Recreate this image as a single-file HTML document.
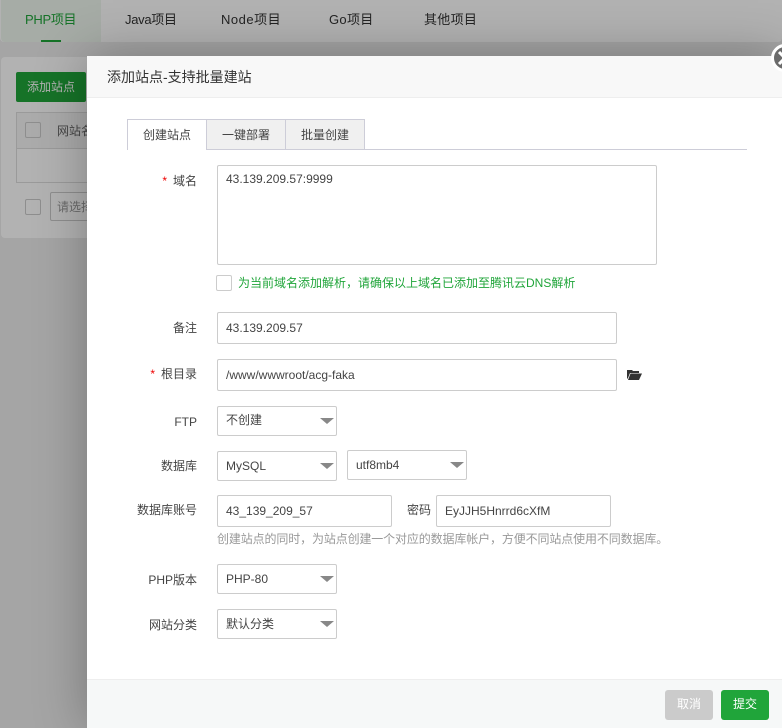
<!DOCTYPE html>
<html><head><meta charset="utf-8">
<style>
html,body{margin:0;padding:0;width:782px;height:728px;overflow:hidden;background:#ececec}
*{box-sizing:border-box}
body{font-family:"Liberation Sans","WenQuanYi Zen Hei","Noto Sans CJK SC",sans-serif;font-size:12px;color:#444;position:relative}
.a{position:absolute;white-space:nowrap}
.l{position:absolute;white-space:nowrap;text-align:right;right:585px;color:#444;line-height:16px}
.l i{color:#e00;font-style:normal;margin-right:6px}
.i{position:absolute;border:1px solid #ccc;border-radius:2px;background:#fff;color:#444;line-height:30px;padding-left:8px;white-space:nowrap;overflow:hidden}
.i.s:after{content:"";position:absolute;right:2px;top:11px;border:7px solid transparent;border-top:6px solid #888;border-bottom:0}
.ov{position:absolute;left:0;top:0;width:782px;height:728px;background:rgba(0,0,0,.3)}
.tb{position:absolute;top:119px;height:31px;border:1px solid #cdcdd8;line-height:30px;text-align:center;background:#f0f0f0;color:#444}
.t{position:absolute;top:12px;color:#333;font-size:13px;line-height:16px;white-space:nowrap}
</style></head><body>
<!-- background page -->
<div class="a" style="left:0;top:0;width:782px;height:42px;background:#fff;border-radius:0 0 4px 4px"></div>
<div class="a" style="left:1px;top:0;width:100px;height:42px;background:#eef6ee;border-radius:0 0 0 4px"></div>
<div class="t" style="left:25px;color:#20a53a;letter-spacing:-.3px">PHP项目</div>
<div class="a" style="left:41px;top:40px;width:20px;height:2px;background:#20a53a"></div>
<div class="t" style="left:125px;letter-spacing:-.3px">Java项目</div>
<div class="t" style="left:221px;letter-spacing:.5px">Node项目</div>
<div class="t" style="left:329px;letter-spacing:.3px">Go项目</div>
<div class="t" style="left:424px;letter-spacing:.3px">其他项目</div>
<div class="a" style="left:1px;top:57px;width:781px;height:181px;background:#fff;border-radius:4px"></div>
<div class="a" style="left:16px;top:72px;width:70px;height:30px;background:#20a53a;border-radius:2px;color:#fff;line-height:30px;padding-left:11px">添加站点</div>
<div class="a" style="left:16px;top:112px;width:72px;height:71px;border:1px solid #ddd;background:#fff"></div>
<div class="a" style="left:17px;top:113px;width:71px;height:36px;background:#f5f5f5;border-bottom:1px solid #ddd"></div>
<div class="a" style="left:25px;top:122px;width:16px;height:16px;border:1px solid #ccc;border-radius:2px"></div>
<div class="a" style="left:57px;top:123px;color:#666;line-height:16px">网站名</div>
<div class="a" style="left:25px;top:199px;width:16px;height:16px;border:1px solid #ccc;border-radius:2px"></div>
<div class="a" style="left:50px;top:192px;width:45px;height:29px;border:1px solid #ccc;border-radius:2px;background:#fff;color:#999;line-height:28px;padding-left:6px;overflow:hidden">请选择</div>
<div class="ov"></div>

<!-- modal -->
<div class="a" style="left:87px;top:56px;width:695px;height:672px;background:#fff;box-shadow:1px 1px 50px rgba(0,0,0,.3)"></div>
<div class="a" style="left:87px;top:56px;width:695px;height:42px;background:#f8f8f8;border-bottom:1px solid #eee;color:#333;font-size:14px;line-height:43px;padding-left:20px">添加站点-支持批量建站</div>
<svg class="a" style="left:770px;top:44px" width="12" height="28" viewBox="0 0 12 28"><circle cx="15" cy="14" r="12.500" fill="#6b6b6b" stroke="#fff" stroke-width="3"/><path d="M9 8l12 12M21 8L9 20" stroke="#fff" stroke-width="3" fill="none"/></svg>

<!-- tabs -->
<div class="a" style="left:127px;top:149px;width:620px;height:1px;background:#cdcdd8"></div>
<div class="tb" style="left:127px;width:80px;background:#fff;border-bottom:0;height:31px">创建站点</div>
<div class="tb" style="left:206px;width:80px">一键部署</div>
<div class="tb" style="left:285px;width:80px">批量创建</div>

<!-- form -->
<div class="l" style="top:173px"><i>*</i>域名</div>
<div class="i" style="left:217px;top:165px;width:440px;height:100px;line-height:16px;padding-top:5px">43.139.209.57:9999</div>
<div class="a" style="left:216px;top:275px;width:16px;height:16px;border:1px solid #ccc;border-radius:2px"></div>
<div class="a" style="left:238px;top:275px;color:#20a53a;line-height:16px">为当前域名添加解析，请确保以上域名已添加至腾讯云DNS解析</div>

<div class="l" style="top:320px">备注</div>
<div class="i" style="left:217px;top:312px;width:400px;height:32px">43.139.209.57</div>

<div class="l" style="top:366px"><i>*</i>根目录</div>
<div class="i" style="left:217px;top:359px;width:400px;height:32px">/www/wwwroot/acg-faka</div>
<svg class="a" style="left:627px;top:369px" width="15" height="11" viewBox="0 0 15 11"><path d="M0 1h5l1 1h6v2H3L1 9 0 10z M3.500 4.500H15L12 11H1z" fill="#333"/></svg>

<div class="l" style="top:414px">FTP</div>
<div class="i s" style="left:217px;top:406px;width:120px;height:30px;line-height:27px">不创建</div>

<div class="l" style="top:458px">数据库</div>
<div class="i s" style="left:217px;top:451px;width:120px;height:30px;line-height:28px">MySQL</div>
<div class="i s" style="left:347px;top:450px;width:120px;height:30px;line-height:28px">utf8mb4</div>

<div class="l" style="top:502px">数据库账号</div>
<div class="i" style="left:217px;top:495px;width:175px;height:32px">43_139_209_57</div>
<div class="a" style="left:407px;top:502px;color:#444;line-height:16px">密码</div>
<div class="i" style="left:436px;top:495px;width:175px;height:32px">EyJJH5Hnrrd6cXfM</div>
<div class="a" style="left:217px;top:531px;color:#999;line-height:16px;letter-spacing:-.13px">创建站点的同时，为站点创建一个对应的数据库帐户，方便不同站点使用不同数据库。</div>

<div class="l" style="top:572px">PHP版本</div>
<div class="i s" style="left:217px;top:564px;width:120px;height:30px;line-height:28px">PHP-80</div>

<div class="l" style="top:617px">网站分类</div>
<div class="i s" style="left:217px;top:609px;width:120px;height:30px;line-height:28px">默认分类</div>

<!-- footer -->
<div class="a" style="left:87px;top:679px;width:695px;height:49px;background:#f6f8f8;border-top:1px solid #eee"></div>
<div class="a" style="left:665px;top:690px;width:48px;height:30px;background:#cbcbcb;border-radius:3px;color:#fff;line-height:29px;text-align:center">取消</div>
<div class="a" style="left:721px;top:690px;width:48px;height:30px;background:#20a53a;border-radius:3px;color:#fff;line-height:29px;text-align:center">提交</div>
</body></html>
